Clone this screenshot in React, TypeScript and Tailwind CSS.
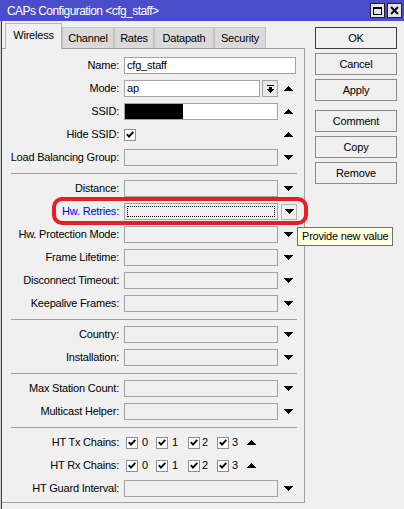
import React from "react";

const Down = () => (
  <svg width="9" height="5" shapeRendering="crispEdges" className="block">
    <rect x="0" y="0" width="9" height="1" fill="#000" />
    <rect x="1" y="1" width="7" height="1" fill="#000" />
    <rect x="2" y="2" width="5" height="1" fill="#000" />
    <rect x="3" y="3" width="3" height="1" fill="#000" />
    <rect x="4" y="4" width="1" height="1" fill="#000" />
  </svg>
);

const Up = () => (
  <svg width="9" height="5" shapeRendering="crispEdges" className="block">
    <rect x="4" y="0" width="1" height="1" fill="#000" />
    <rect x="3" y="1" width="3" height="1" fill="#000" />
    <rect x="2" y="2" width="5" height="1" fill="#000" />
    <rect x="1" y="3" width="7" height="1" fill="#000" />
    <rect x="0" y="4" width="9" height="1" fill="#000" />
  </svg>
);

const Check = () => (
  <div className="w-[12px] h-[12px] border border-[#8f8f8f] bg-white flex items-center justify-center shrink-0">
    <svg width="8" height="7" viewBox="0 0 8 7" className="block">
      <path d="M0.8 3.2 L3 5.6 L7.3 0.8" stroke="#000" strokeWidth="1.9" fill="none" />
    </svg>
  </div>
);

const Row = ({
  label,
  blue,
  children,
}: {
  label: string;
  blue?: boolean;
  children?: React.ReactNode;
}) => (
  <div className="flex h-[23px] items-center">
    <div
      className={
        "w-[118px] text-right whitespace-nowrap leading-none " +
        (blue ? "text-[#0000ff]" : "text-black")
      }
    >
      {label}:
    </div>
    <div className="ml-[5px] flex items-center">{children}</div>
  </div>
);

const EmptyInput = () => (
  <div className="w-[154px] h-[17px] border border-[#a3a3a3] bg-[#f0f0f0]" />
);

const DownRow = ({ label }: { label: string }) => (
  <Row label={label}>
    <EmptyInput />
    <div className="ml-[6px]">
      <Down />
    </div>
  </Row>
);

const Sep = () => (
  <div className="h-[8px] flex items-center">
    <div className="ml-[10px] w-[286px] h-px bg-[#a0a0a0]" />
  </div>
);

const Btn = ({ children, def }: { children: React.ReactNode; def?: boolean }) => (
  <div
    className={
      "w-[82px] h-[22px] flex items-center justify-center bg-[#f0f0f0] border " +
      (def ? "border-[#3c3c3c]" : "border-[#8c8c8c]")
    }
  >
    {children}
  </div>
);

const Chains = () => (
  <div className="flex items-center">
    <div className="w-[2px]" />
    <div className="flex items-center w-[30px]">
      <Check />
      <span className="ml-[4px]">0</span>
    </div>
    <div className="flex items-center w-[32px]">
      <Check />
      <span className="ml-[4px]">1</span>
    </div>
    <div className="flex items-center w-[29px]">
      <Check />
      <span className="ml-[2px]">2</span>
    </div>
    <div className="flex items-center w-[30px]">
      <Check />
      <span className="ml-[3px]">3</span>
    </div>
    <Up />
  </div>
);

export default function App() {
  return (
    <div className="relative w-[404px] h-[509px] overflow-hidden bg-[#f0f0f0] text-[11px] tracking-[-0.2px] text-black font-['Liberation_Sans',Arial,sans-serif]">
      {/* title bar */}
      <div className="h-[21px] bg-[#4b4cca] flex items-center">
        <span className="ml-[7px] text-white text-[12px] tracking-[-0.55px] leading-none">
          CAPs Configuration &lt;cfg_staff&gt;
        </span>
        <div className="ml-auto mr-[2px] flex gap-[2px]">
          <div className="w-[15px] h-[15px] bg-[#e4e4e4] border border-[#222] flex items-center justify-center">
            <div className="w-[9px] h-[8px] border border-black border-t-2" />
          </div>
          <div className="w-[15px] h-[15px] bg-[#e4e4e4] border border-[#222] flex items-center justify-center">
            <svg width="9" height="9" viewBox="0 0 9 9" className="block">
              <path d="M1 1L8 8M8 1L1 8" stroke="#000" strokeWidth="2" />
            </svg>
          </div>
        </div>
      </div>

      <div className="flex">
        {/* left part */}
        <div className="relative w-[305px] h-[488px]">
          <div className="absolute left-0 top-0 w-[1px] h-full bg-[#cfcfcf]" />
          <div className="absolute left-[1px] top-0 w-[1px] h-full bg-[#3a3a3a]" />
          {/* tabs */}
          <div className="flex items-end h-[27px] pl-[5px]">
            <div className="relative z-10 -mb-px w-[57px] h-[26px] bg-[#f0f0f0] border border-b-0 border-[#b5b5b5] flex items-center justify-center pb-[2px]">
              Wireless
            </div>
            <div className="w-[52px] h-[21px] bg-[#dadada] border border-b-0 border-[#c4c4c4] flex items-center justify-center">
              Channel
            </div>
            <div className="w-[40px] h-[21px] bg-[#dadada] border border-b-0 border-[#c4c4c4] flex items-center justify-center">
              Rates
            </div>
            <div className="w-[60px] h-[21px] bg-[#dadada] border border-b-0 border-[#c4c4c4] flex items-center justify-center">
              Datapath
            </div>
            <div className="w-[52px] h-[21px] bg-[#dadada] border border-b-0 border-[#c4c4c4] flex items-center justify-center">
              Security
            </div>
          </div>
          {/* panel */}
          <div className="ml-[1px] h-[455px] border border-l-0 border-[#a0a0a0] pt-[5px]">
            <Row label="Name">
              <div className="w-[172px] h-[17px] border border-[#a3a3a3] bg-white flex items-center pl-[2px]">
                cfg_staff
              </div>
            </Row>
            <Row label="Mode">
              <div className="w-[136px] h-[17px] border border-[#a3a3a3] bg-white flex items-center pl-[2px]">
                ap
              </div>
              <div className="ml-[2px] w-[16px] h-[17px] border border-[#a3a3a3] bg-[#e9e9e9] flex items-center justify-center">
                <svg width="7" height="8" shapeRendering="crispEdges" className="block">
                  <rect x="0" y="0" width="7" height="1" fill="#000" />
                  <rect x="2" y="2" width="3" height="2" fill="#000" />
                  <rect x="0" y="4" width="7" height="1" fill="#000" />
                  <rect x="1" y="5" width="5" height="1" fill="#000" />
                  <rect x="2" y="6" width="3" height="1" fill="#000" />
                  <rect x="3" y="7" width="1" height="1" fill="#000" />
                </svg>
              </div>
              <div className="ml-[6px]">
                <Up />
              </div>
            </Row>
            <Row label="SSID">
              <div className="w-[154px] h-[17px] border border-[#a3a3a3] bg-white flex">
                <div className="w-[58px] h-full bg-black" />
              </div>
              <div className="ml-[6px]">
                <Up />
              </div>
            </Row>
            <Row label="Hide SSID">
              <Check />
              <div className="ml-[148px]">
                <Up />
              </div>
            </Row>
            <DownRow label="Load Balancing Group" />
            <Sep />
            <DownRow label="Distance" />
            <Row label="Hw. Retries" blue>
              <div className="w-[154px] h-[17px] border border-[#a3a3a3] bg-[#f0f0f0] p-[2px]">
                <div className="w-full h-full border border-dotted border-black" />
              </div>
              <div className="ml-[3px] w-[16px] h-[16px] border border-[#b4b4b4] bg-[#f0f0f0] flex items-center justify-center">
                <Down />
              </div>
            </Row>
            <DownRow label="Hw. Protection Mode" />
            <DownRow label="Frame Lifetime" />
            <DownRow label="Disconnect Timeout" />
            <DownRow label="Keepalive Frames" />
            <Sep />
            <DownRow label="Country" />
            <DownRow label="Installation" />
            <Sep />
            <DownRow label="Max Station Count" />
            <DownRow label="Multicast Helper" />
            <Sep />
            <Row label="HT Tx Chains">
              <Chains />
            </Row>
            <Row label="HT Rx Chains">
              <Chains />
            </Row>
            <DownRow label="HT Guard Interval" />
          </div>
        </div>

        {/* right buttons */}
        <div className="ml-[10px] mt-[6px] flex flex-col">
          <Btn def>OK</Btn>
          <div className="h-[4px]" />
          <Btn>Cancel</Btn>
          <div className="h-[4px]" />
          <Btn>Apply</Btn>
          <div className="h-[9px]" />
          <Btn>Comment</Btn>
          <div className="h-[4px]" />
          <Btn>Copy</Btn>
          <div className="h-[4px]" />
          <Btn>Remove</Btn>
        </div>
      </div>

      {/* red highlight */}
      <div className="absolute left-[52px] top-[197px] w-[256px] h-[28px] border-[4px] border-[#ed1c24] rounded-[10px]" />

      {/* tooltip */}
      <div className="absolute left-[297px] top-[227px] w-[96px] h-[19px] bg-[#ffffe1] border border-[#6e6e6e] flex items-center pl-[4px] whitespace-nowrap">
        Provide new value
      </div>
    </div>
  );
}
